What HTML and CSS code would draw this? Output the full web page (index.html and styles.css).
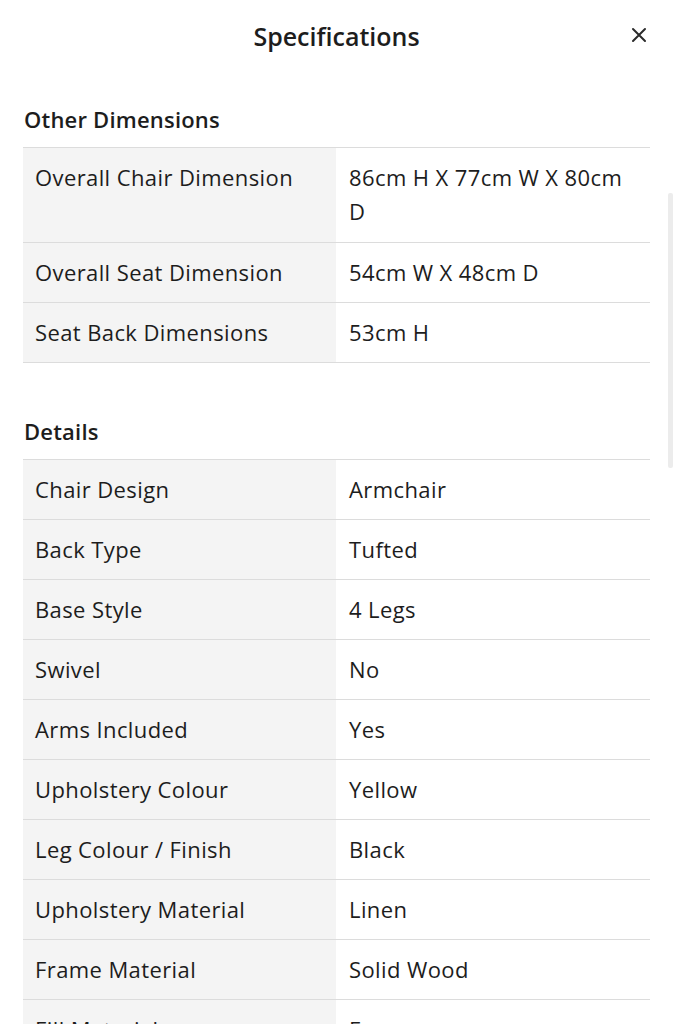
FILE: index.html
```html
<!DOCTYPE html>
<html lang="en">
<head>
<meta charset="utf-8">
<title>Specifications</title>
<link rel="stylesheet" href="styles.css">
</head>
<body>
<div class="modal">
  <header class="modal-header">
    <h1 class="modal-title">Specifications</h1>
    <button class="close-btn" aria-label="Close">
      <svg width="16" height="16" viewBox="0 0 16 16"><path d="M2 2 L14 14 M14 2 L2 14" stroke="#2b2b2b" stroke-width="2" stroke-linecap="round" fill="none"/></svg>
    </button>
  </header>

  <section class="spec-section">
    <h2 class="section-title">Other Dimensions</h2>
    <div class="spec-table">
      <div class="spec-row tall"><div class="spec-label">Overall Chair Dimension</div><div class="spec-value">86cm H X 77cm W X 80cm D</div></div>
      <div class="spec-row"><div class="spec-label">Overall Seat Dimension</div><div class="spec-value">54cm W X 48cm D</div></div>
      <div class="spec-row"><div class="spec-label">Seat Back Dimensions</div><div class="spec-value">53cm H</div></div>
    </div>
  </section>

  <section class="spec-section details">
    <h2 class="section-title">Details</h2>
    <div class="spec-table">
      <div class="spec-row"><div class="spec-label">Chair Design</div><div class="spec-value">Armchair</div></div>
      <div class="spec-row"><div class="spec-label">Back Type</div><div class="spec-value">Tufted</div></div>
      <div class="spec-row"><div class="spec-label">Base Style</div><div class="spec-value">4 Legs</div></div>
      <div class="spec-row"><div class="spec-label">Swivel</div><div class="spec-value">No</div></div>
      <div class="spec-row"><div class="spec-label">Arms Included</div><div class="spec-value">Yes</div></div>
      <div class="spec-row"><div class="spec-label">Upholstery Colour</div><div class="spec-value">Yellow</div></div>
      <div class="spec-row"><div class="spec-label">Leg Colour / Finish</div><div class="spec-value">Black</div></div>
      <div class="spec-row"><div class="spec-label">Upholstery Material</div><div class="spec-value">Linen</div></div>
      <div class="spec-row"><div class="spec-label">Frame Material</div><div class="spec-value">Solid Wood</div></div>
      <div class="spec-row"><div class="spec-label">Fill Material</div><div class="spec-value">Foam</div></div>
    </div>
  </section>
  <div class="scroll-thumb"></div>
</div>
</body>
</html>
```

FILE: styles.css
```css
* { box-sizing: border-box; }
html, body { margin: 0; padding: 0; background: #fff; }
body {
  font-family: "Open Sans", "Noto Sans", sans-serif;
  color: #1d1d1d;
  height: 1024px;
  overflow: hidden;
}
.modal { position: relative; }
.modal-header {
  height: 72px;
  display: flex;
  align-items: center;
  justify-content: center;
  position: relative;
}
.modal-title {
  margin: 0;
  font-size: 25px;
  font-weight: 600;
  line-height: 30px;
}
.close-btn {
  position: absolute;
  right: 26px;
  top: 27px;
  width: 16px;
  height: 16px;
  padding: 0;
  border: 0;
  background: none;
  display: flex;
}
.spec-section { padding: 0 23px; }
.section-title {
  margin: 33px 0 14px 1px;
  font-size: 22px;
  font-weight: 600;
  line-height: 28px;
  letter-spacing: 0.2px;
}
.details .section-title { margin-top: 54px; margin-bottom: 14px; }
.spec-table { border-top: 1px solid #dcdcdc; }
.spec-row {
  display: grid;
  grid-template-columns: 313px 1fr;
  border-bottom: 1px solid #dcdcdc;
}
.spec-label, .spec-value {
  font-size: 22px;
  line-height: 34px;
  letter-spacing: 0.4px;
  padding: 12px 16px 13px 12px;
}
.spec-row.tall .spec-label, .spec-row.tall .spec-value { padding-bottom: 14px; }
.spec-label { background: #f4f4f4; }
.spec-value { padding-left: 13px; padding-right: 24px; }
.scroll-thumb {
  position: absolute;
  right: 0;
  top: 193px;
  width: 5px;
  height: 275px;
  background: #ececec;
  border-radius: 2px;
}
```
